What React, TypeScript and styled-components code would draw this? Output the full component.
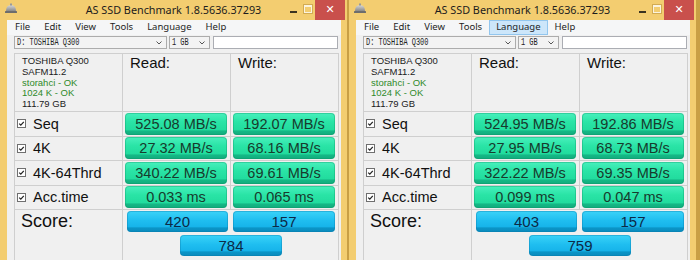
import React from "react"
import styled, { createGlobalStyle } from "styled-components"

const GlobalStyle = createGlobalStyle`
	html, body {
		margin: 0;
		padding: 0;
	}
	body {
		background: #c99f45;
		width: 700px;
		height: 260px;
		overflow: hidden;
		font-family: "Liberation Sans", Arial, sans-serif;
	}
`

interface BenchRun {
	rows: { label: string; read: string; write: string }[]
	readScore: string
	writeScore: string
	total: string
	menuActive?: string
}

const RUNS: BenchRun[] = [
	{
		rows: [
			{ label: "Seq", read: "525.08 MB/s", write: "192.07 MB/s" },
			{ label: "4K", read: "27.32 MB/s", write: "68.16 MB/s" },
			{ label: "4K-64Thrd", read: "340.22 MB/s", write: "69.61 MB/s" },
			{ label: "Acc.time", read: "0.033 ms", write: "0.065 ms" },
		],
		readScore: "420",
		writeScore: "157",
		total: "784",
	},
	{
		rows: [
			{ label: "Seq", read: "524.95 MB/s", write: "192.86 MB/s" },
			{ label: "4K", read: "27.95 MB/s", write: "68.73 MB/s" },
			{ label: "4K-64Thrd", read: "322.22 MB/s", write: "69.35 MB/s" },
			{ label: "Acc.time", read: "0.099 ms", write: "0.047 ms" },
		],
		readScore: "403",
		writeScore: "157",
		total: "759",
		menuActive: "Language",
	},
]

const MENU = ["File", "Edit", "View", "Tools", "Language", "Help"]

const Desktop = styled.div`
	display: flex;
	gap: 2px;
	height: 260px;
	overflow: hidden;
`

const Window = styled.div`
	width: 347px;
	flex: none;
	background: #f3cd70;
	display: flex;
	flex-direction: column;
`

const TitleBar = styled.div`
	height: 22px;
	display: grid;
	grid-template-columns: 61px 1fr 61px;
	align-items: start;
`

const AppIcon = styled.svg`
	margin: 3px 0 0 5px;
	display: block;
`

const Title = styled.div`
	text-align: center;
	font-family: "Noto Sans", sans-serif;
	font-size: 10.8px;
	line-height: 20px;
	color: #1c1c1c;
	white-space: nowrap;
`

const Controls = styled.div`
	display: flex;
	justify-content: flex-end;
	padding-right: 2px;
`

const MinButton = styled.div`
	width: 14px;
	height: 20px;
	display: flex;
	align-items: center;
	justify-content: center;
	&::after {
		content: "";
		width: 7px;
		height: 2px;
		margin-top: 3px;
		background: #3b3320;
	}
`

const MaxButton = styled.div`
	width: 15px;
	height: 20px;
	display: flex;
	align-items: center;
	justify-content: center;
	&::after {
		content: "";
		width: 6px;
		height: 5px;
		margin-top: -2px;
		border: 1px solid #fbf3de;
		border-top-width: 2px;
		box-shadow: 0 0 0 1px rgba(150, 110, 30, 0.35);
	}
`

const CloseButton = styled.div`
	width: 30px;
	height: 20px;
	background: #c9504c;
	color: #fff;
	font-family: "DejaVu Sans", sans-serif;
	font-size: 11px;
	font-weight: bold;
	line-height: 19px;
	text-align: center;
`

const Client = styled.div`
	margin: 0 6px 0 7px;
	background: #f0f0f0;
	height: 250px;
	display: flex;
	flex-direction: column;
`

const MenuBar = styled.div`
	height: 15px;
	background: #f5f6f7;
	display: flex;
	align-items: center;
	padding-left: 1px;
`

const MenuItem = styled.div<{ $active?: boolean }>`
	height: 13px;
	padding: 0 6px;
	border: 1px solid ${(p) => (p.$active ? "#92c6ee" : "transparent")};
	background: ${(p) => (p.$active ? "#cce6fa" : "transparent")};
	font-family: "Noto Sans", sans-serif;
	font-size: 9.5px;
	line-height: 12px;
	color: #1e1e1e;
`

const ComboRow = styled.div`
	display: flex;
	gap: 2px;
	margin-top: 1px;
	padding-left: 7px;
	height: 13px;
`

const Combo = styled.div<{ $width: number }>`
	width: ${(p) => p.$width}px;
	box-sizing: border-box;
	border: 1px solid #acacac;
	background: #f3f3f3;
	display: flex;
	align-items: center;
	justify-content: space-between;
	padding: 0 4px 0 2px;
	overflow: hidden;
`

const ComboText = styled.span`
	font-family: "Liberation Mono", monospace;
	font-size: 10.5px;
	line-height: 11px;
	color: #222;
	display: inline-block;
	transform: scaleX(0.66);
	transform-origin: left center;
	white-space: pre;
`

const TextBox = styled.div`
	width: 125px;
	margin-left: 1px;
	box-sizing: border-box;
	border: 1px solid #abadb3;
	background: #fff;
`

const Grid = styled.div`
	margin: 4px 0 0 7px;
	width: 325px;
	height: 210px;
	box-sizing: border-box;
	display: grid;
	grid-template-columns: 107px 107px 107px;
	grid-template-rows: 57px repeat(4, 23.5px) 1fr;
	gap: 1px;
	border: 1px solid #cfcfcf;
	background: #cfcfcf;
`

const Cell = styled.div`
	background: #f0f0f0;
	min-width: 0;
`

const InfoCell = styled(Cell)`
	padding: 2px 0 0 7px;
	font-size: 9.5px;
	line-height: 10.8px;
	color: #1a1a1a;
`

const InfoLine = styled.div<{ $ok?: boolean }>`
	color: ${(p) => (p.$ok ? "#2f8a2a" : "#1a1a1a")};
`

const HeaderCell = styled(Cell)`
	padding: 0 0 0 7px;
	font-size: 15px;
	line-height: 17px;
	color: #111;
`

const LabelCell = styled(Cell)`
	display: flex;
	align-items: center;
	gap: 7px;
	padding-left: 2px;
	font-size: 14.5px;
	color: #111;
`

const BarCell = styled(Cell)`
	display: flex;
	align-items: center;
	padding: 0 3px 0 2px;
`

const ValueBar = styled.div<{ $tone: "green" | "blue"; $h: number }>`
	height: ${(p) => p.$h}px;
	width: 100%;
	box-sizing: border-box;
	border-radius: 4px;
	display: flex;
	align-items: center;
	justify-content: center;
	font-size: ${(p) => (p.$tone === "green" ? 14.5 : 15)}px;
	color: ${(p) => (p.$tone === "green" ? "#173a2d" : "#0c2a47")};
	background: ${(p) =>
		p.$tone === "green"
			? "linear-gradient(#48f0bd 0%, #2ae4a6 40%, #22dc9e 76%, #15b886 82%, #11ab7c 100%)"
			: "linear-gradient(#3bd3f8 0%, #1fbef0 45%, #17b4ea 74%, #0b95c7 81%, #0a8bbc 100%)"};
	box-shadow: inset 0 0 0 1px
		${(p) => (p.$tone === "green" ? "rgba(12, 150, 100, 0.35)" : "rgba(8, 120, 170, 0.35)")};
`

const ScoreLabel = styled(Cell)`
	padding: 1px 0 0 6px;
	font-size: 18px;
	line-height: 21px;
	color: #111;
`

const ScoreCell = styled(Cell)`
	grid-column: span 2;
	display: grid;
	grid-template-columns: 101px 102px;
	column-gap: 5px;
	row-gap: 3px;
	align-content: start;
	padding: 1px 3px 0 4px;
`

const TotalSlot = styled.div`
	grid-column: 1 / -1;
	justify-self: center;
	width: 102px;
`

const CheckBox = () => (
	<svg width="9" height="9" viewBox="0 0 9 9">
		<rect x="0.5" y="0.5" width="8" height="8" fill="#fff" stroke="#6f6f6f" />
		<path d="M2.2 4.6 L3.8 6.2 L6.8 2.8" fill="none" stroke="#222" strokeWidth="1.2" />
	</svg>
)

const Chevron = () => (
	<svg width="6" height="4" viewBox="0 0 6 4">
		<path d="M0.5 0.5 L3 3 L5.5 0.5" fill="none" stroke="#555" strokeWidth="1" />
	</svg>
)

const BenchWindow = ({ run }: { run: BenchRun }) => (
	<Window>
		<TitleBar>
			<AppIcon width="12" height="10" viewBox="0 0 12 10">
				<defs>
					<linearGradient id="dome" x1="0" y1="0" x2="0" y2="1">
						<stop offset="0" stopColor="#d8d8d8" />
						<stop offset="1" stopColor="#8a8a8a" />
					</linearGradient>
				</defs>
				<path d="M1 8 Q1 2 6 2 Q11 2 11 8 Z" fill="url(#dome)" />
				<rect x="0" y="8" width="12" height="2" rx="0.5" fill="#6d6d6d" />
				<rect x="5" y="0.5" width="2" height="2" fill="#9a9a9a" />
			</AppIcon>
			<Title>AS SSD Benchmark 1.8.5636.37293</Title>
			<Controls>
				<MinButton />
				<MaxButton />
				<CloseButton>✕</CloseButton>
			</Controls>
		</TitleBar>
		<Client>
			<MenuBar>
				{MENU.map((m) => (
					<MenuItem key={m} $active={m === run.menuActive}>
						{m}
					</MenuItem>
				))}
			</MenuBar>
			<ComboRow>
				<Combo $width={153}>
					<ComboText>D: TOSHIBA Q300</ComboText>
					<Chevron />
				</Combo>
				<Combo $width={41}>
					<ComboText>1 GB</ComboText>
					<Chevron />
				</Combo>
				<TextBox />
			</ComboRow>
			<Grid>
				<InfoCell>
					<InfoLine>TOSHIBA Q300</InfoLine>
					<InfoLine>SAFM11.2</InfoLine>
					<InfoLine $ok>storahci - OK</InfoLine>
					<InfoLine $ok>1024 K - OK</InfoLine>
					<InfoLine>111.79 GB</InfoLine>
				</InfoCell>
				<HeaderCell>Read:</HeaderCell>
				<HeaderCell>Write:</HeaderCell>
				{run.rows.map((r) => (
					<React.Fragment key={r.label}>
						<LabelCell>
							<CheckBox />
							{r.label}
						</LabelCell>
						<BarCell>
							<ValueBar $tone="green" $h={22}>
								{r.read}
							</ValueBar>
						</BarCell>
						<BarCell>
							<ValueBar $tone="green" $h={22}>
								{r.write}
							</ValueBar>
						</BarCell>
					</React.Fragment>
				))}
				<ScoreLabel>Score:</ScoreLabel>
				<ScoreCell>
					<ValueBar $tone="blue" $h={21}>
						{run.readScore}
					</ValueBar>
					<ValueBar $tone="blue" $h={21}>
						{run.writeScore}
					</ValueBar>
					<TotalSlot>
						<ValueBar $tone="blue" $h={21}>
							{run.total}
						</ValueBar>
					</TotalSlot>
				</ScoreCell>
			</Grid>
		</Client>
	</Window>
)

const App = () => (
	<>
		<GlobalStyle />
		<Desktop>
			{RUNS.map((run, i) => (
				<BenchWindow key={i} run={run} />
			))}
		</Desktop>
	</>
)

export default App
